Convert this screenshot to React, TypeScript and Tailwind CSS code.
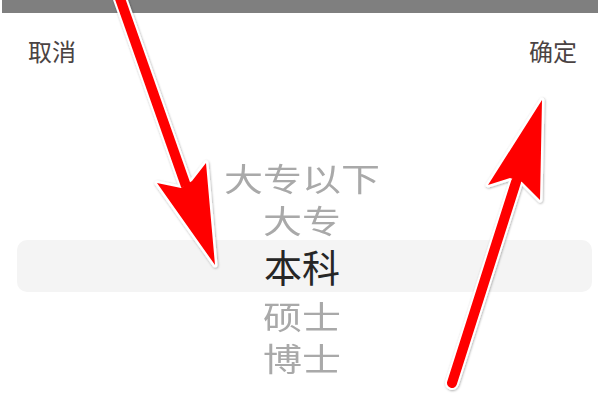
import React from 'react';

interface PickerRow {
  label: string;
  height: string;
}

const rows: PickerRow[] = [
  { label: '大专以下', height: 'h-[41px]' },
  { label: '大专', height: 'h-[42px]' },
  { label: '本科', height: 'h-[52px]' },
  { label: '硕士', height: 'h-[46px]' },
  { label: '博士', height: 'h-[39px]' },
];

const SELECTED = 2;

const Arrows: React.FC = () => (
  <svg
    className="absolute inset-0 pointer-events-none"
    width="600"
    height="402"
    viewBox="0 0 600 402"
    fill="none"
  >
    <defs>
      <filter id="halo" x="-20%" y="-20%" width="140%" height="140%">
        <feDropShadow dx="0.6" dy="0.8" stdDeviation="1" floodColor="#000" floodOpacity="0.35" />
      </filter>
    </defs>

    {/* left arrow, pointing down at the selected row */}
    <g filter="url(#halo)">
      <line x1="117" y1="-10" x2="186" y2="186" stroke="#fff" strokeWidth="14" strokeLinecap="round" />
      <polygon
        points="215,265 157,183 181,188 192,181 206,163"
        fill="#fff"
        stroke="#fff"
        strokeWidth="5"
        strokeLinejoin="round"
      />
      <line x1="117" y1="-10" x2="186" y2="186" stroke="#ff0000" strokeWidth="10" />
      <polygon points="215,265 157,183 181,188 192,181 206,163" fill="#ff0000" />
    </g>

    {/* right arrow, pointing up at 确定 */}
    <g filter="url(#halo)">
      <line x1="452" y1="383" x2="516" y2="182" stroke="#fff" strokeWidth="14" strokeLinecap="round" />
      <polygon
        points="542,100 488,185 510,178 522,182 540,200"
        fill="#fff"
        stroke="#fff"
        strokeWidth="5"
        strokeLinejoin="round"
      />
      <line x1="452" y1="383" x2="516" y2="182" stroke="#ff0000" strokeWidth="10" strokeLinecap="round" />
      <polygon points="542,100 488,185 510,178 522,182 540,200" fill="#ff0000" />
    </g>
  </svg>
);

const App: React.FC = () => {
  return (
    <div
      className="relative w-[600px] h-[402px] bg-white overflow-hidden"
      style={{ fontFamily: '"Noto Sans CJK SC", "Noto Sans", sans-serif' }}
    >
      {/* dimmed page edge above the sheet */}
      <div className="h-[13px] mx-[2px] bg-[#7f7f7f]" />

      {/* header */}
      <div className="flex justify-between pl-[28px] pr-[23px] pt-[26px] text-[24px] leading-[24px] text-[#4a4343]">
        <span>取消</span>
        <span>确定</span>
      </div>

      {/* picker wheel */}
      <div className="mt-[94px] flex flex-col">
        {rows.map((row, i) =>
          i === SELECTED ? (
            <div
              key={row.label}
              className={`${row.height} ml-[17px] mr-[8px] pr-[5px] rounded-[10px] bg-[#f4f4f4] flex items-center justify-center`}
            >
              <span className="text-[38px] leading-[38px] text-[#262626]">{row.label}</span>
            </div>
          ) : (
            <div key={row.label} className={`${row.height} pl-[4px] flex items-center justify-center`}>
              <span className="inline-block scale-y-[0.82] text-[39px] leading-[39px] text-[#a9a9a9]">
                {row.label}
              </span>
            </div>
          )
        )}
      </div>

      <Arrows />
    </div>
  );
};

export default App;
